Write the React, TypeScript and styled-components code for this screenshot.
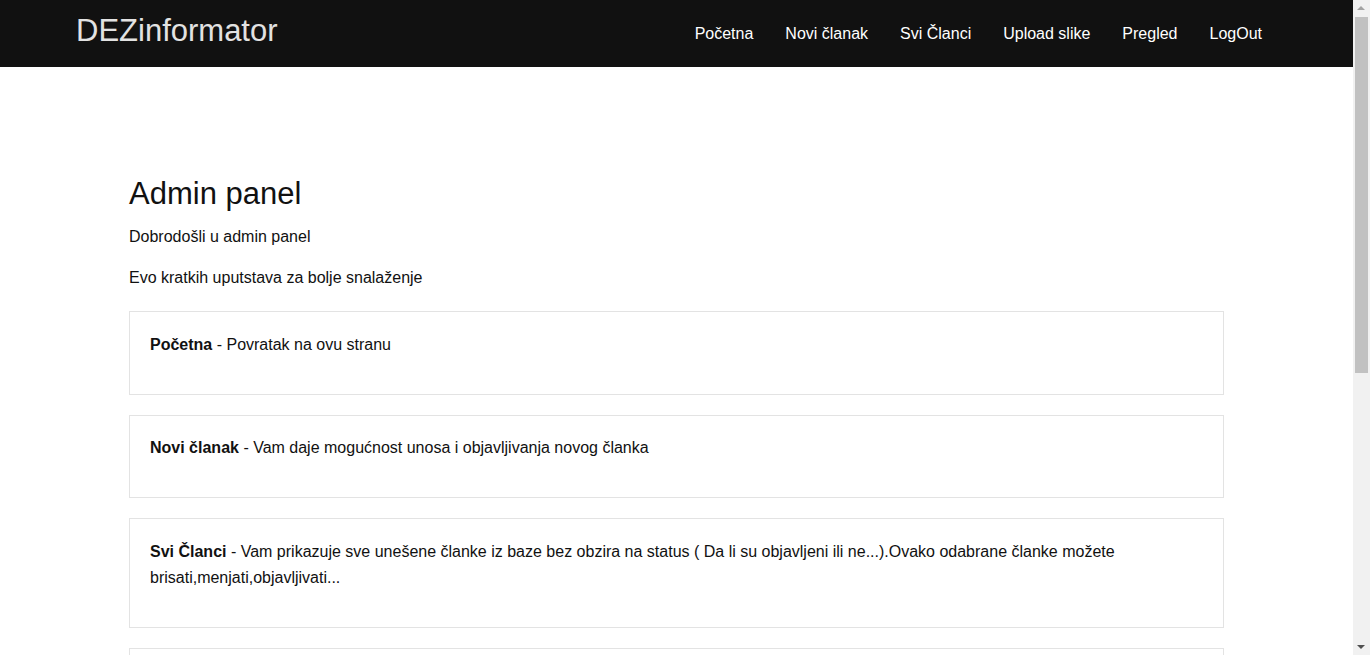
import React from "react";
import styled, { createGlobalStyle } from "styled-components";

const GlobalStyle = createGlobalStyle`
  html, body { margin: 0; padding: 0; }
  body {
    font-family: "Liberation Sans", Arial, Helvetica, sans-serif;
    font-size: 16px;
    color: #111;
    background: #fff;
  }
  * { box-sizing: border-box; }
`;

const Page = styled.div`
  padding-right: 17px;
`;

/* Browser scrollbar as seen in the reference, drawn over the right edge */
const ScrollTrack = styled.div`
  position: fixed;
  top: 0;
  right: 0;
  width: 17px;
  height: 100vh;
  background: #f1f1f1;
  z-index: 10;
`;

const ScrollThumb = styled.div`
  position: absolute;
  top: 17px;
  left: 2px;
  width: 13px;
  height: 356px;
  background: #c1c1c1;
`;

const Arrow = styled.div<{ $down?: boolean }>`
  position: absolute;
  left: 4px;
  width: 0;
  height: 0;
  border-left: 4px solid transparent;
  border-right: 4px solid transparent;
  ${(p) =>
    p.$down
      ? `bottom: 6px; border-top: 4px solid #505050;`
      : `top: 6px; border-bottom: 4px solid #a3a3a3;`}
`;

const NavBar = styled.nav`
  background: #111111;
  height: 67px;
  display: flex;
  align-items: center;
  justify-content: space-between;
  padding: 0 91px 0 76px;
`;

const Brand = styled.a`
  color: #e2e2e2;
  font-size: 31px;
  line-height: 1;
  text-decoration: none;
  margin-top: -7px;
`;

const NavList = styled.ul`
  list-style: none;
  margin: 0;
  padding: 0;
  display: flex;
  gap: 32px;
`;

const NavLink = styled.a`
  color: #fff;
  font-size: 16px;
  text-decoration: none;
  line-height: 1;
`;

const Main = styled.main`
  width: 1095px;
  margin: 0 auto;
  padding: 110px 0 184px;
`;

const Title = styled.h2`
  font-size: 31px;
  font-weight: 400;
  line-height: 33px;
  margin: 0 0 14px;
`;

const Intro = styled.p<{ $last?: boolean }>`
  margin: 0 0 ${(p) => (p.$last ? 20 : 15)}px;
  line-height: 26px;
`;

const Card = styled.div`
  border: 1px solid #e3e3e3;
  padding: 19.5px 20px 0.01px;
  margin-bottom: 20px;
`;

const CardText = styled.p`
  margin: 0 0 36.2px;
  line-height: 26px;
`;

const items = [
  { title: "Početna", text: "Povratak na ovu stranu" },
  { title: "Novi članak", text: "Vam daje mogućnost unosa i objavljivanja novog članka" },
  {
    title: "Svi Članci",
    text:
      "Vam prikazuje sve unešene članke iz baze bez obzira na status ( Da li su objavljeni ili ne...).Ovako odabrane članke možete brisati,menjati,objavljivati...",
  },
  { title: "Upload slike", text: "Vam omogućava postavljanje slika na server" },
  { title: "Pregled", text: "Vam prikazuje kako izgleda sajt" },
  { title: "LogOut", text: "Odjava iz admin panela" },
];

const navLinks = ["Početna", "Novi članak", "Svi Članci", "Upload slike", "Pregled", "LogOut"];

export default function App() {
  return (
    <Page>
      <GlobalStyle />
      <NavBar>
        <Brand href="#">DEZinformator</Brand>
        <NavList>
          {navLinks.map((l) => (
            <li key={l}>
              <NavLink href="#">{l}</NavLink>
            </li>
          ))}
        </NavList>
      </NavBar>
      <Main>
        <Title>Admin panel</Title>
        <Intro>Dobrodošli u admin panel</Intro>
        <Intro $last>Evo kratkih uputstava za bolje snalaženje</Intro>
        {items.map((it) => (
          <Card key={it.title}>
            <CardText>
              <b>{it.title}</b> - {it.text}
            </CardText>
          </Card>
        ))}
      </Main>
      <ScrollTrack aria-hidden>
        <Arrow />
        <ScrollThumb />
        <Arrow $down />
      </ScrollTrack>
    </Page>
  );
}
